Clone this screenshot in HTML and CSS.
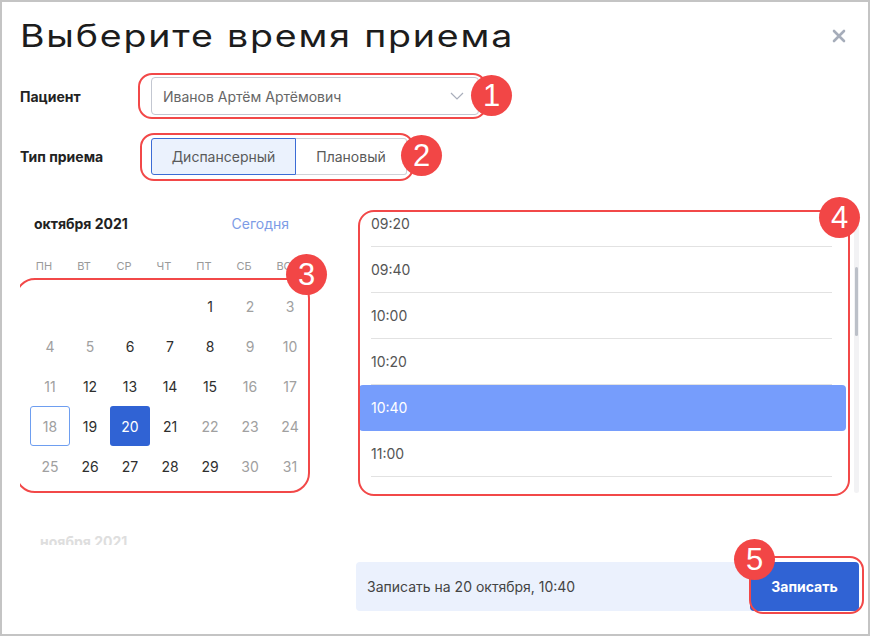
FILE: index.html
```html
<!DOCTYPE html>
<html lang="ru">
<head>
<meta charset="utf-8">
<title>Выберите время приема</title>
<link rel="stylesheet" href="styles.css">
</head>
<body>
<div class="frame">
  <div class="modal">
    <header class="head">
      <h1 class="title">Выберите время приема</h1>
      <button class="close" aria-label="Закрыть">
        <svg width="14" height="14" viewBox="0 0 14 14"><path d="M2 2L12 12M12 2L2 12" stroke="#a6adba" stroke-width="2.6" stroke-linecap="round"/></svg>
      </button>
    </header>

    <div class="row row-patient">
      <div class="label">Пациент</div>
      <div class="anno">
        <div class="select">
          <span>Иванов Артём Артёмович</span>
          <svg class="chev" width="14" height="8" viewBox="0 0 14 8"><path d="M1 1L7 7L13 1" fill="none" stroke="#a9aebb" stroke-width="1.2"/></svg>
        </div>
        <div class="ring ring-1"></div>
        <div class="badge badge-1">1</div>
      </div>
    </div>

    <div class="row row-type">
      <div class="label">Тип приема</div>
      <div class="anno">
        <div class="segs">
          <div class="seg seg-on">Диспансерный</div>
          <div class="seg">Плановый</div>
        </div>
        <div class="ring ring-2"></div>
        <div class="badge badge-2">2</div>
      </div>
    </div>

    <div class="main">
      <div class="cal">
        <div class="cal-head">
          <span class="month">октября 2021</span>
          <span class="today">Сегодня</span>
        </div>
        <div class="weekdays">
          <span>ПН</span><span>ВТ</span><span>СР</span><span>ЧТ</span><span>ПТ</span><span>СБ</span><span>ВС</span>
        </div>
        <div class="anno">
          <div class="days">
            <span></span><span></span><span></span><span></span>
            <span class="d">1</span><span class="d off">2</span><span class="d off">3</span>
            <span class="d off">4</span><span class="d off">5</span><span class="d">6</span><span class="d">7</span><span class="d">8</span><span class="d off">9</span><span class="d off">10</span>
            <span class="d off">11</span><span class="d">12</span><span class="d">13</span><span class="d">14</span><span class="d">15</span><span class="d off">16</span><span class="d off">17</span>
            <span class="d off cur">18</span><span class="d">19</span><span class="d sel">20</span><span class="d">21</span><span class="d off">22</span><span class="d off">23</span><span class="d off">24</span>
            <span class="d off">25</span><span class="d">26</span><span class="d">27</span><span class="d">28</span><span class="d">29</span><span class="d off">30</span><span class="d off">31</span>
          </div>
          <div class="ring ring-3"></div>
          <div class="badge badge-3">3</div>
        </div>
        <div class="cal-head next">
          <span class="month faded">ноября 2021</span>
        </div>
      </div>

      <div class="times">
        <div class="anno list-wrap">
          <div class="list">
            <div class="scroll">
              <div class="slot"><div class="slot-in">09:20</div></div>
              <div class="slot"><div class="slot-in">09:40</div></div>
              <div class="slot"><div class="slot-in">10:00</div></div>
              <div class="slot"><div class="slot-in">10:20</div></div>
              <div class="slot slot-on"><div class="slot-in">10:40</div></div>
              <div class="slot"><div class="slot-in">11:00</div></div>
              <div class="slot"><div class="slot-in"></div></div>
            </div>
          </div>
          <div class="track"><div class="thumb"></div></div>
          <div class="ring ring-4"></div>
          <div class="badge badge-4">4</div>
        </div>
      </div>

      <div class="spacer"></div>
      <div class="foot">
        <div class="info">Записать на 20 октября, 10:40</div>
        <div class="anno">
          <button class="submit">Записать</button>
          <div class="ring ring-5"></div>
          <div class="badge badge-5">5</div>
        </div>
      </div>
    </div>
  </div>
</div>
</body>
</html>
```

FILE: styles.css
```css
* { box-sizing: border-box; }
html, body { margin: 0; padding: 0; background: #fff; }
body { font-family: Inter, "Noto Sans", sans-serif; color: #333; }

.frame {
  width: 870px;
  height: 636px;
  border: 2px solid #c4c4c4;
  overflow: hidden;
  background: #fff;
}
.modal { padding: 14px 10px 0 18px; }

.head { display: flex; align-items: center; justify-content: space-between; height: 40px; }
.title {
  margin: 0;
  font-size: 31px;
  line-height: 40px;
  font-weight: 400;
  color: #1c1c1c;
  letter-spacing: 1.5px;
  transform: scaleX(1.21);
  transform-origin: left center;
  white-space: nowrap;
}
.close { border: 0; background: none; padding: 0; margin-right: 12px; width: 14px; height: 14px; display: flex; }

.row { display: flex; align-items: center; }
.row-patient { margin-top: 21px; }
.row-type { margin-top: 23px; }
.label { width: 131px; font-size: 14px; font-weight: 700; color: #222; }

.anno { position: relative; }
.ring { position: absolute; border: 2px solid #f24848; border-radius: 14px; pointer-events: none; }
.badge {
  position: absolute;
  width: 41px; height: 41px;
  border-radius: 50%;
  background: #f24646;
  color: #fff;
  font-family: "Liberation Sans", Arial, sans-serif;
  font-size: 31px;
  line-height: 41px;
  text-align: center;
}

.select {
  width: 328px; height: 38px;
  border: 1px solid #c3c7d1;
  border-radius: 4px;
  display: flex; align-items: center; justify-content: space-between;
  padding: 0 14px 0 11px;
  font-size: 14px; color: #666;
}
.ring-1 { left: -13px; right: -8px; top: -4px; bottom: -4px; }
.badge-1 { right: -33px; top: -2px; }

.segs { display: flex; height: 37px; }
.seg {
  display: flex; align-items: center; justify-content: center;
  font-size: 14px; color: #5a5a5a;
  border: 1px solid #cfd2d8; border-left: 0;
  border-radius: 0 3px 3px 0;
  width: 111px;
}
.seg-on {
  width: 145px;
  background: #ebf2fd;
  border: 1px solid #3b6cd5;
  border-radius: 3px 0 0 3px;
}
.ring-2 { left: -11px; right: -7px; top: -5px; bottom: -6px; }
.badge-2 { right: -35px; top: -3px; }

.main {
  display: grid;
  grid-template-columns: 336px 503px;
  grid-template-rows: 345px 17px 49px;
  margin-top: 25px;
}
.cal { overflow: hidden; }
.cal-head {
  margin-left: 14px; width: 255px; height: 46px;
  display: flex; align-items: center; justify-content: space-between;
}
.month { font-size: 14px; font-weight: 700; color: #222; }
.today { font-size: 14px; color: #7d9ce6; }
.cal-head.next { margin-top: 32px; margin-left: 20px; }
.month.faded { color: #dedede; font-size: 14px; }

.weekdays {
  margin-left: 4px; width: 280px; height: 40px;
  display: grid; grid-template-columns: repeat(7, 40px);
  align-items: center; justify-items: center;
  font-size: 11px; color: #9a9a9a;
}
.cal > .anno { margin-left: 10px; width: 280px; }
.days { display: grid; grid-template-columns: repeat(7, 40px); grid-auto-rows: 40px; }
.d {
  display: flex; align-items: center; justify-content: center;
  font-size: 14px; color: #2e2e2e; border-radius: 3px;
}
.d.off { color: #a0a0a0; }
.d.cur { border: 1px solid #6e9ef0; }
.d.sel { background: #3063d4; color: #fff; }
.ring-3 { left: -15px; right: 0px; top: -8px; bottom: -7px; border-radius: 20px; }
.badge-3 { right: -17px; top: -32px; }

.times { padding-top: 10px; }
.list-wrap { display: flex; margin-left: 3px; height: 283px; gap: 8px; }
.list { flex: 1; overflow: hidden; }
.scroll { margin-top: -9px; }
.slot { height: 46px; padding: 0 14px 0 12px; border-radius: 4px; }
.slot-in {
  height: 46px; display: flex; align-items: center;
  border-bottom: 1px solid #e2e2e2;
  font-size: 14px; color: #555;
}
.slot-on { background: #769dfc; }
.slot-on .slot-in { color: #fff; border-bottom-color: transparent; }
.track { width: 5px; background: #f2f2f4; border-radius: 3px; padding: 57px 1px 0; }
.thumb { height: 69px; background: #bcc0c8; border-radius: 2px; }
.ring-4 { left: -1px; right: 9px; top: 0; bottom: -3px; border-radius: 16px; }
.badge-4 { right: -1px; top: -13px; }

.spacer { grid-column: 1 / 3; }
.foot { grid-column: 2; display: flex; }
.info {
  flex: 1;
  background: #ebf1fd;
  border-radius: 4px 0 0 4px;
  display: flex; align-items: center;
  padding-left: 11px;
  font-size: 14px; color: #444;
}
.submit {
  width: 109px; height: 49px;
  border: 0; border-radius: 4px;
  background: #3063d4; color: #fff;
  font-family: Inter, sans-serif; font-size: 14px; font-weight: 700;
  margin-left: -6px;
}
.ring-5 { left: -7px; right: -5px; top: -6px; bottom: -3px; }
.badge-5 { left: -22px; top: -23px; }
```
